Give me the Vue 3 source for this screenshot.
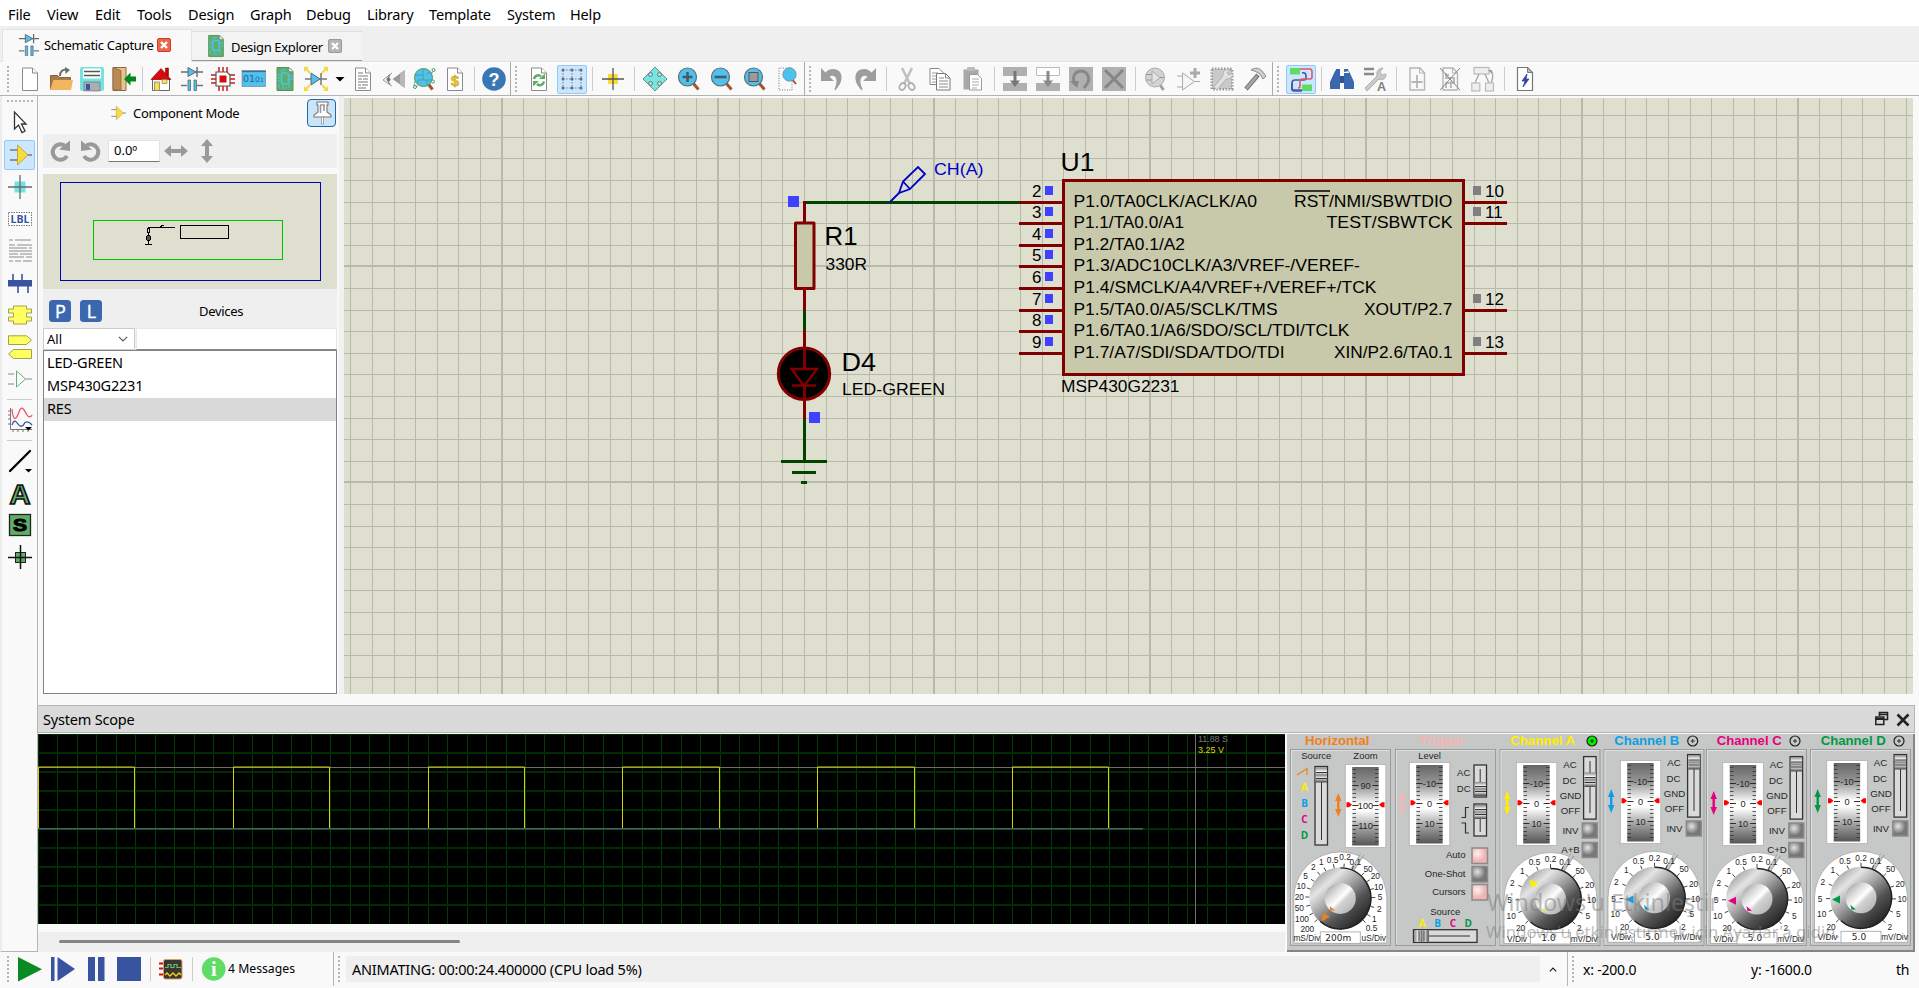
<script setup>
const menus = [
  ['File', 39], ['View', 48], ['Edit', 42], ['Tools', 51], ['Design', 62], ['Graph', 56],
  ['Debug', 61], ['Library', 62], ['Template', 78], ['System', 63], ['Help', 40]
]

const lens = '<path d="M15.5 15.5l6 7" stroke="#a0562f" stroke-width="3"/><circle cx="10.5" cy="10" r="9" fill="#4fc1ec" stroke="#5c6b72" stroke-width="1.2"/>'
const diode = '<path d="M1 5h22M17 0v10" stroke="#6a6a6a" stroke-width="1.4"/><path d="M8 .5l8 4.5-8 4.5z" fill="#4fc1ec" stroke="#5a6a72"/>'
const page = '<path d="M4.5 1h10l5 5v17.500h-15z" fill="#fff" stroke="#8a8a8a"/><path d="M14.500 1v5h5" fill="#fff" stroke="#8a8a8a"/>'
const pageGrey = '<path d="M5 1h10l4.500 5v17h-14.500z" fill="#f8f8f8" stroke="#b5b5b5" stroke-width="1.400"/><path d="M14.500 1v5h5" fill="none" stroke="#b5b5b5"/>'
const pcb = '<path d="M4 .5h12l4 4v19h-16z" fill="#5fae68" stroke="#5b8f60"/><path d="M16 .5v4h4z" fill="#fff" stroke="#8a8a8a" stroke-width=".7"/><rect x="8.500" y="6" width="7" height="11" rx="2" fill="none" stroke="#4fc1ec" stroke-width="1.600"/><path d="M4.500 8h3M4.500 11h3M4.500 14h3M16 9h4M16 12h4M10 17v4h4M9 6v-3h4M16 15v6M6 17v4" stroke="#4fc1ec" fill="none"/>'

const icons = {
  new: page,
  open: '<path d="M1.500 22.500v-14h7l2 2h11v4" fill="#a9794a" stroke="#8d6336"/><path d="M1 23l3.500-10h19.500l-2 10z" fill="#f2b661"/><path d="M11 9c0-5 3-7 7-6.500" fill="none" stroke="#6b6b6b" stroke-width="2"/><path d="M16 0l5 3-4.500 4z" fill="#6b6b6b"/>',
  save: '<path d="M0 2q0-2 2-2h20q2 0 2 2v20q0 2-2 2H2q-2 0-2-2z" fill="#74e2df"/><rect x="3" y="1.500" width="18" height="10" fill="#fff"/><path d="M4 4.500h16M4 8.500h16" stroke="#555" stroke-width="1.300"/><path d="M4 15h16v9H4z" fill="#a9aeb5" stroke="#666" stroke-width=".6"/><rect x="6" y="17" width="4" height="6" fill="#3853a0"/>',
  exit: '<path d="M1 .5h13v23h-13z" fill="#e6c391" stroke="#8e6b3c"/><path d="M1 .5l8 3v20l-8-1z" fill="#b98a58" stroke="#86612f" stroke-width=".7"/><path d="M12 12l6.500-6.500v4H24v5h-5.500v4z" fill="#008a1e"/>',
  home: '<path d="M3.500 12h17v11.500h-17z" fill="#fff" stroke="#666"/><path d="M16.500 1h3v8h-3z" fill="#c00" stroke="#600" stroke-width=".5"/><path d="M12 1.500l10 11H2z" fill="#d80c0c" stroke="#8d0000" stroke-width=".6"/><rect x="5.500" y="15" width="5" height="8.500" fill="#f7de4a" stroke="#777" stroke-width=".7"/><rect x="13" y="12.500" width="5" height="4" fill="#f7de4a" stroke="#777" stroke-width=".6"/>',
  schem: diode + '<path d="M1 18.500h6M17 18.500h6" stroke="#777" stroke-width="1.400"/><path d="M8 13h2.500v10.500H8zM14 13h2.500v10.500H14z" fill="#4fc1ec" stroke="#5a6a72" stroke-width=".8"/>',
  chip: '<path d="M8 0v24M12 0v24M16 0v24M0 8h24M0 12h24M0 16h24" stroke="#d01717" stroke-width="1.500"/><path d="M5 5h11l3 3v11H5z" fill="#fff" stroke="#555" stroke-width="1.200"/><rect x="8.500" y="8.500" width="7" height="7" fill="#d80c0c"/>',
  bits: '<rect x="0" y="3.500" width="23.500" height="16" fill="#4fc1ec" stroke="#6a7a82" stroke-width=".6"/><path d="M0 4.500h24" stroke="#3c6f92" stroke-width="1.200"/><text x="1" y="15" font-size="9.500" font-family="DejaVu Sans" fill="#2c5b9c">01<tspan font-size="7.500">0</tspan><tspan font-size="6">1</tspan></text>',
  pcb,
  diodeY: '<path d="M1 1l5 5M23 1l-5 5M1 23l5-5M23 23l-5-5" stroke="#f5d93a" stroke-width="2"/><path d="M0 0h5L0 5zM24 0v5l-5-5zM0 24v-5l5 5zM24 24h-5l5-5z" fill="#f5d93a"/><path d="M1 12h22M17 6v12" stroke="#777" stroke-width="1.500"/><path d="M7 6l9 6-9 6z" fill="#4fc1ec" stroke="#5a6a72"/>',
  drop: '<path d="M7.500 10h9l-4.500 4.500z" fill="#000"/>',
  doc: page + '<path d="M7 6h5M7 9h10M7 12h4M12 12h5M7 15h10M7 18h3M11 18h6M7 21h8" stroke="#777"/>',
  eye: '<path d="M1 13l9-7M1 13l9 6" stroke="#999" fill="none"/><path d="M8 7.500q-4 5 0 10" fill="none" stroke="#888" stroke-width="1.300"/><circle cx="6.500" cy="12.500" r="2" fill="#777"/><path d="M10.500 12l12.500-9v18z" fill="#9a9a9a"/><path d="M18 6l5-3v18l-5-3z" fill="#b8b8b8"/>',
  globe: '<path d="M15.500 16l5 6.500" stroke="#a0562f" stroke-width="3"/><circle cx="11.500" cy="10.500" r="9" fill="#4fc1ec" stroke="#4b9a62" stroke-width="1"/><path d="M3 8h8v-6M11 8v5h9M15 13v6M6 17v-4h5M15 6h5l2-3M3 14l-1 5h4" fill="none" stroke="#3f9f86" stroke-width=".8"/><circle cx="21.500" cy="3" r="1.500" fill="#fff" stroke="#4b9a62"/><circle cx="3" cy="20" r="1.500" fill="#fff" stroke="#4b9a62"/><circle cx="21" cy="14.500" r="1.500" fill="#fff" stroke="#4b9a62"/>',
  bill: page + '<text x="12" y="19" text-anchor="middle" font-size="15" font-weight="700" font-family="Liberation Sans" fill="#f5c51f" stroke="#a98c20" stroke-width=".4">$</text>',
  help: '<circle cx="12" cy="12" r="11.800" fill="#3b76b4"/><text x="12" y="18.500" text-anchor="middle" font-size="18" font-weight="700" font-family="Liberation Sans" fill="#fff">?</text>',
  refresh: page + '<path d="M7 12c1-4 5-4.500 7-2.500" stroke="#5fae68" stroke-width="2.500" fill="none"/><path d="M12 12h6V6.500z" fill="#5fae68"/><path d="M17 14.500c-1 4-5 4.500-7 2.500" stroke="#5fae68" stroke-width="2.500" fill="none"/><path d="M12 14H6v5.500z" fill="#5fae68"/>',
  grid: '<g stroke="#6f7f8b" stroke-dasharray="1.500 1.500"><path d="M3 3h18M3 12h18M3 21h18M3 3v18M12 3v18M21 3v18"/></g><g fill="#5f6e7a"><circle cx="3" cy="3" r="1.500"/><circle cx="12" cy="3" r="1.500"/><circle cx="21" cy="3" r="1.500"/><circle cx="3" cy="12" r="1.500"/><circle cx="12" cy="12" r="1.500"/><circle cx="21" cy="12" r="1.500"/><circle cx="3" cy="21" r="1.500"/><circle cx="12" cy="21" r="1.500"/><circle cx="21" cy="21" r="1.500"/></g>',
  origin: '<rect x="7" y="7" width="10" height="10" fill="#f7dc3a"/><path d="M1 12h22M12 1v22" stroke="#555" stroke-width="1.300"/>',
  move: '<path d="M12 0l6 6h-3v3h3V6l6 6-6 6v-3h-3v3h3l-6 6-6-6h3v-3H6v3l-6-6 6-6v3h3V6H6z" fill="#74e6e2" stroke="#6b7f80" stroke-width=".9"/><path d="M6 6h3v3H6zM15 6h3v3h-3zM6 15h3v3H6zM15 15h3v3h-3z" fill="#fff" stroke="#6b7f80" stroke-width=".9"/>',
  zin: lens + '<path d="M10.500 5v10M5.500 10h10" stroke="#4a5a62" stroke-width="2.600"/>',
  zout: lens + '<path d="M4.500 10h12" stroke="#4a5a62" stroke-width="2.600"/>',
  zfit: lens + '<rect x="6" y="5.500" width="9" height="9" fill="#9a9a9a" stroke="#555"/>',
  zarea: '<path d="M3 1v22h13V1z" fill="none" stroke="#777" stroke-dasharray="1 1.500"/><path d="M16 12l4 5" stroke="#a0562f" stroke-width="2"/><circle cx="13.500" cy="7.500" r="6.700" fill="#4fc1ec" stroke="#5c8ba0" stroke-width=".7"/>',
  undo: '<path d="M1 1v13h13l-4.500-4.500c5-3 10 2 5 12.500l.5 1.500C25 14 23 2 13 2 9 2 7 4 5.500 5.500z" fill="#9d9d9d"/>',
  redo: '<path d="M23 1v13H10l4.500-4.500c-5-3-10 2-5 12.500l-.5 1.500C-1 14 1 2 11 2c4 0 6 2 7.500 3.500z" fill="#9d9d9d"/>',
  cut: '<path d="M7 1l8 16M17 1L9 17" stroke="#c0c0c0" stroke-width="2.600"/><ellipse cx="7.500" cy="19.500" rx="2.800" ry="3.600" fill="none" stroke="#b0b0b0" stroke-width="1.700" transform="rotate(35 7.500 19.500)"/><ellipse cx="16.500" cy="19.500" rx="2.800" ry="3.600" fill="none" stroke="#b0b0b0" stroke-width="1.700" transform="rotate(-35 16.500 19.500)"/>',
  copy: '<path d="M2 1.500h9l4 4v12H2z" fill="#fff" stroke="#888"/><path d="M4 6h6M4 9h6M4 12h6M4 15h6" stroke="#999"/><path d="M8.500 6.500h9l4.500 4.500v12H8.500z" fill="#fff" stroke="#777"/><path d="M17.500 6.500v4.500H22M11 11h5M11 14h9M11 17h9M11 20h9" fill="none" stroke="#888"/>',
  paste: '<path d="M2.500 2.500h15v20h-15z" fill="#a9a9a9"/><rect x="6" y="0" width="8" height="4" rx="1" fill="#bcbcbc"/><path d="M8.500 7.500h8l4 4v11.500h-12z" fill="#fff" stroke="#999"/><path d="M11 12h7M11 15h7M11 18h7M11 21h5" stroke="#aaa"/>',
  bcopy: '<path d="M0 0h24v9H0zM0 16h24v8H0z" fill="#b0b0b0"/><path d="M10.500 4h3v9.500H17L12 20l-5-6.500h3.500z" fill="#777"/>',
  bmove: '<path d="M.5 .5h23v8H.5z" fill="#fff" stroke="#bbb"/><path d="M0 16h24v8H0z" fill="#b0b0b0"/><path d="M10.500 4h3v9.500H17L12 20l-5-6.500h3.500z" fill="#8a8a8a"/>',
  brot: '<path d="M0 0h24v24H0z" fill="#b0b0b0"/><path d="M6 17c-4-8 1-13 6-13 6 0 10 7 6 13l-3 4" fill="none" stroke="#888" stroke-width="3"/><path d="M1 14h9l-2 7z" fill="#888"/>',
  bdel: '<path d="M0 0h24v24H0z" fill="#b0b0b0"/><path d="M3 3l18 18M21 3L3 21" stroke="#858585" stroke-width="3"/>',
  pick: '<path d="M15.500 17l4 6" stroke="#a0a0a0" stroke-width="3"/><circle cx="11" cy="10.500" r="9.500" fill="#d3d3d3" stroke="#aaa"/><path d="M2 7.500h6M2 13h6M15 10.500h5" stroke="#999"/><path d="M8 4v13l8-6.500z" fill="#e4e4e4" stroke="#aaa"/>',
  make: '<path d="M0 9h5M0 20h5M17 14.500h6" stroke="#aaa"/><path d="M5.500 6v17l12-8.500z" fill="#f6f6f6" stroke="#aaa"/><path d="M18 1v10M13 6h10" stroke="#aaa" stroke-width="3"/>',
  pkg: '<path d="M2 2h20v20H2z" fill="#c9c9c9" stroke="#999" stroke-width="3" stroke-dasharray="1.500 1.500"/><path d="M3 3h18v18H3z" fill="#c9c9c9"/><path d="M4 20L13 9q-1-7 7-7l-3 4 2 2 4-2q0 6-7 6L7 23z" fill="#e2e2e2" stroke="#aaa" stroke-width=".8"/>',
  hammer: '<path d="M15 8L3 22" stroke="#777" stroke-width="4.500"/><path d="M14 9L3.500 21.500" stroke="#a8a8a8" stroke-width="2.600"/><path d="M8 3c5-3 8-2 11 1l4 5-3 3-3-5c-3-2-5-3-9-4z" fill="#d0d0d0" stroke="#8a8a8a"/>',
  wires: '<path d="M13 6q4-1 4 3v2q0 2-2 2H6q-3 0-3 3v5q0 2 2 2h8" fill="none" stroke="#45579d" stroke-width="1.600"/><path d="M11 2h10q2 0 2 3v5q0 2-2 2h-8q-2 0-2 3v4q0 2-2 2" fill="none" stroke="#e35367" stroke-width="1.600"/><path d="M3 16v6q0 2 2 2h8" fill="none" stroke="#45579d" stroke-width="1.600"/><rect x="1" y="1" width="10" height="6.500" fill="#5fdc66"/><rect x="13" y="17.500" width="10" height="6.500" fill="#5fdc66"/>',
  binoc: '<path d="M5 4l5 1v17H0v-7zM19 4l-5 1v17h10v-7zM6 2h4v4H5zM14 2h4l1 4h-5z" fill="#3b67ae"/><path d="M10 9h4v7h-4z" fill="#2d5594"/>',
  wrenchA: '<path d="M1 2h10M1 7h10" stroke="#8a8a8a" stroke-width="2.600"/><path d="M2 21L14 9c-1-5 2-8 6-8l-3 4 2 3 4-1c0 5-4 7-7 5L4 24z" fill="#c9c9c9" stroke="#a5a5a5" stroke-width=".8"/><text x="18.500" y="23.500" text-anchor="middle" font-size="12.500" font-weight="700" font-family="Liberation Sans" fill="#808080">A</text>',
  sheetAdd: pageGrey + '<path d="M12 8v13M6.500 15h11" stroke="#b5b5b5" stroke-width="1.800"/>',
  sheetDel: pageGrey + '<path d="M8 6v5h8v5H8v5M8 8h3M13 14v7" fill="none" stroke="#bbb" stroke-width="2"/><path d="M2 1l20 22M22 1L2 23" stroke="#888"/>',
  hier: '<rect x="3" y=".5" width="15" height="6.500" fill="#eee" stroke="#bbb" stroke-width="1.200"/><path d="M8 7l-4 9M14 7l4 9M20 3c3 5 2 9 0 13" fill="none" stroke="#aaa" stroke-width="1.400"/><rect x=".8" y="16" width="8" height="8" fill="#eee" stroke="#bbb" stroke-width="1.200"/><rect x="14.500" y="16" width="8" height="8" fill="#eee" stroke="#bbb" stroke-width="1.200"/><path d="M17 3h4v4z" fill="#999"/>',
  erc: '<path d="M4.500 .5h10l5 5v18h-15z" fill="#fff" stroke="#777" stroke-width="1.200"/><path d="M14.500 .5v5h5z" fill="#bbb" stroke="#666" stroke-width=".8"/><path d="M14 7l-5 7h3l-2 6 6-8h-3z" fill="#35499f" stroke="#35499f" stroke-width=".8"/>',
  arrow: '<path d="M6.500 1v17l4-4 3.500 7.500 3-1.500-3.500-7H18z" fill="#fff" stroke="#333" stroke-width="1.300"/>',
  comp: '<path d="M2 7h8M2 17h8M17 12h7" stroke="#7a7a7a" stroke-width="1.300"/><path d="M9.500 2v20L20 12z" fill="#f9dc38" stroke="#b59a35" stroke-width=".8"/>',
  junction: '<rect x="6.500" y="6.500" width="11" height="11" fill="#74e2df"/><path d="M0 12h24M12 0v24" stroke="#5f6c6c" stroke-width="1.300"/>',
  lbl: '<rect x=".5" y="5.500" width="23" height="13" fill="#fff" stroke="#777" stroke-dasharray="1.500 1"/><text x="12" y="16" text-anchor="middle" font-size="10.500" textLength="19" font-family="Open Sans" font-weight="700" fill="#3853a0">LBL</text>',
  script: '<path d="M1 1h4M7 1h16M1 6h6M9 6h15M1 9h18M21 9h3M1 12h23M1 15h9M12 15h12M1 18h15M18 18h6M1 22h4M7 22h6M15 22h9" stroke="#8b8b8b" stroke-width="1.200"/>',
  bus: '<path d="M5 3v8M14 3v8M10 13v9M20 13v9" stroke="#3853a0" stroke-width="1.600"/><rect x="0" y="9" width="24" height="6.500" fill="#3853a0"/>',
  sub: '<path d="M.5 6h5V3h13v3h5v4h-5v4h5v4h-5v3h-13v-3h-5v-4h5v-4h-5z" fill="#ffff60" stroke="#a2a24a" stroke-width="1"/>',
  terms: '<path d="M.5 .8h18l5 4.200-5 4.500H.5zM23.500 14.500h-18l-5 4.500 5 4.500h18z" fill="#ffff60" stroke="#a2a24a"/>',
  pin: '<path d="M0 7h6M0 17h6M18 12h6" stroke="#888"/><path d="M8.500 4v16l9-8z" fill="#fff" stroke="#5fae78"/>',
  graph: '<path d="M2.500 0v21.500H24M0 3h2M0 7h2M0 11h2M0 16h2M5 22v2M10 22v2M15 22v2M20 22v2" fill="none" stroke="#777"/><path d="M4 1c1 12 4 12 7 3s6 0 8 3 4 2 5 0" fill="none" stroke="#ec5460" stroke-width="1.300"/><path d="M4 17c2-6 4-4 6-1s5 3 6 0 5-3 8 1" fill="none" stroke="#3853a0" stroke-width="1.300"/><path d="M17 19h7l-3.500 3.500z"/>',
  line: '<path d="M2 22L22 2" stroke="#000" stroke-width="2.300" stroke-linecap="round"/><path d="M17 20h7l-3.500 3.500z"/>',
  textA: '<text x="12" y="22.500" text-anchor="middle" font-size="28" textLength="21" lengthAdjust="spacingAndGlyphs" font-family="Liberation Sans" font-weight="700" fill="#5fae68" stroke="#111" stroke-width="1.600">A</text>',
  symS: '<rect x="1.500" y="1.500" width="21" height="21" fill="#5fae68" stroke="#222" stroke-width="1.300"/><text x="12" y="17.800" text-anchor="middle" font-size="16" textLength="14" lengthAdjust="spacingAndGlyphs" font-family="Liberation Sans" font-weight="700" fill="#000" stroke="#000">S</text>',
  marker: '<rect x="7.500" y="7.500" width="10" height="10" fill="#5fae68" stroke="#222"/><path d="M0 12.500h24M12.500 0v24" stroke="#111" stroke-width="1.500"/>'
}

// [kind, centre] along the bar's main axis; spacing is derived from neighbouring centres
const widths = { grip: 4, sep: 1, tall: 1 }
function layout(list, start, boxed) {
  let edge = start
  return list.map(([name, c]) => {
    const w = boxed.includes(name) ? 30 : (widths[name] || 24)
    const gap = c - w / 2 - edge
    edge = c + w / 2
    return { name, gap: gap + 'px', on: boxed.includes(name) }
  })
}
const toolbar = layout([
  ['grip', 8], ['new', 30], ['open', 61], ['save', 92], ['exit', 123.5], ['sep', 142.5], ['home', 161], ['schem', 192],
  ['chip', 223], ['bits', 254], ['pcb', 285], ['diodeY', 316], ['drop', 339.5], ['doc', 363], ['eye', 393.5], ['globe', 424],
  ['bill', 455], ['sep', 474.5], ['help', 493.5], ['tall', 510.5], ['grip', 516], ['refresh', 539], ['grid', 571.5],
  ['sep', 592.5], ['origin', 613], ['sep', 634.5], ['move', 655], ['zin', 689], ['zout', 722], ['zfit', 755], ['zarea', 788],
  ['tall', 804.5], ['grip', 810], ['undo', 832], ['redo', 865], ['sep', 886.5], ['cut', 907], ['copy', 940], ['paste', 973],
  ['sep', 994.5], ['bcopy', 1015], ['bmove', 1048], ['brot', 1081], ['bdel', 1114], ['sep', 1135.5], ['pick', 1156], ['make', 1189],
  ['pkg', 1222], ['hammer', 1255], ['tall', 1272.5], ['grip', 1278], ['wires', 1300.5], ['sep', 1321.5], ['binoc', 1342],
  ['wrenchA', 1375], ['sep', 1396.5], ['sheetAdd', 1417], ['sheetDel', 1450], ['hier', 1483], ['sep', 1504.5], ['erc', 1525]
], 2, ['grid', 'wires'])
const modes = layout([
  ['grip', 101], ['arrow', 123], ['comp', 155], ['junction', 187], ['lbl', 219], ['script', 251], ['bus', 282.5],
  ['sub', 315], ['terms', 347], ['pin', 379], ['sep', 399.5], ['graph', 420], ['sep', 440.5], ['line', 461],
  ['textA', 493], ['symS', 525], ['marker', 557]
], 96, ['comp'])

const devices = ['LED-GREEN', 'MSP430G2231', 'RES']

const vLines = Array.from({ length: 73 }, (_, i) => i - 7).map(k => ({ p: Math.floor(502 + 21.6 * k), major: k % 10 === 0 }))
const hLines = Array.from({ length: 28 }, (_, i) => i - 7).map(k => ({ p: Math.floor(266.9 + 21.6 * k), major: k % 10 === 0 }))

const leftPins = [
  [2, 202, 'P1.0/TA0CLK/ACLK/A0', 183.5], [3, 223, 'P1.1/TA0.0/A1', 110.5], [4, 245, 'P1.2/TA0.1/A2', 111.5],
  [5, 266, 'P1.3/ADC10CLK/A3/VREF-/VEREF-', 286.5], [6, 288, 'P1.4/SMCLK/A4/VREF+/VEREF+/TCK', 303],
  [7, 310, 'P1.5/TA0.0/A5/SCLK/TMS', 204], [8, 331, 'P1.6/TA0.1/A6/SDO/SCL/TDI/TCLK', 276],
  [9, 353, 'P1.7/A7/SDI/SDA/TDO/TDI', 211]
]
const rightPins = [
  [10, 202, 'RST/NMI/SBWTDIO', 158.5], [11, 223, 'TEST/SBWTCK', 126], [12, 310, 'XOUT/P2.7', 88.5], [13, 353, 'XIN/P2.6/TA0.1', 118.5]
]

const scopeV = Array.from({ length: 64 }, (_, i) => Math.round(38 + 19.48 * i) + 0.5)
const scopeH = Array.from({ length: 11 }, (_, i) => Math.round(734 + 19.05 * i))
const step = 97.4
const highs = Array.from({ length: 6 }, (_, i) => [Math.round(38 + step * 2 * i) + 0.5, Math.round(38 + step * (2 * i + 1)) - 0.5])

const ticks = Array.from({ length: 19 }, (_, i) => -36 + i * 4)
const chanDial = [
  [-30, 29.3, '20'], [-39.3, 16.7, '10'], [-41, 1, '5'], [-38.3, -16.3, '2'], [-28.3, -28.3, '1'], [-16, -37, '0.5'],
  [0, -40, '0.2'], [14.5, -37, '0.1'], [29.5, -28.5, '50'], [39, -14, '20'], [41, 1.3, '10'], [37.3, 16.7, '5'], [28.7, 29.3, '2']
]
const timeDial = [
  [-33, 30.3, '200'], [-38.3, 20.7, '100'], [-41, 9.3, '50'], [-41, -1.7, '20'], [-39.3, -12.3, '10'], [-34.7, -22.7, '5'],
  [-27, -31.3, '2'], [-19, -36, '1'], [-7.7, -38.3, '0.5'], [4.7, -41, '0.2'], [15, -36.7, '0.1'], [27.7, -29.7, '50'],
  [35, -22, '20'], [38.3, -11.3, '10'], [39.7, -1, '5'], [39, 10.3, '2'], [34, 20.3, '1'], [31.3, 30, '0.5']
]
const tick = ([x, y]) => {
  const r = Math.hypot(x, y)
  return `M${x / r * 31} ${y / r * 31}L${x / r * 35} ${y / r * 35}`
}
const edgePointer = 'M-29 1.700L-21-2.300V5.700z'
const innerPointer = 'M-10.700 7L-5 11.700L-9.500 12z'
const channels = [
  { n: 'A', x: 1500, dy: 0, color: '#ffee00', lamp: 92, on: true, value: '1.0', thumb: 16.5, extra: 'A+B', outer: 'M-21.300-19.300L-12-16.300L-18-11z', inner: 'M-9.700 9.300L-4 11.700H-8z' },
  { n: 'B', x: 1604, dy: -2, color: '#0c9fe4', lamp: 88.7, value: '5.0', thumb: 1, outer: edgePointer, inner: innerPointer },
  { n: 'C', x: 1706.5, dy: 0, color: '#e5007d', lamp: 88.5, value: '5.0', thumb: 1, extra: 'C+D', outer: edgePointer, inner: innerPointer },
  { n: 'D', x: 1810.5, dy: -2, color: '#009846', lamp: 88.5, value: '5.0', thumb: 1, outer: edgePointer, inner: innerPointer }
]
const dials = [
  { x: 1340.3, y: 898.4, labels: timeDial, color: '#f08019', outer: 'M-19 23L-17 14.700L-10.300 18.300z', inner: 'M-10.700 7.700L-5 12H-10z', value: '200m', left: 'mS/Div', right: 'uS/Div' },
  ...channels.map(c => ({ x: c.x + 50.5, y: 899 + c.dy * 0.6, labels: chanDial, color: c.color, outer: c.outer, inner: c.inner, value: c.value, left: 'V/Div', right: 'mV/Div' }))
]
const wheels = [
  { x: 1365.5, y: 805.5, labels: ['90', '100', '110'], ax: 1338.3, color: '#f08019' },
  { x: 1429.5, y: 803.5, labels: ['-10', '0', '10'], ax: 1402.3, color: '#f7b5b5' },
  ...channels.map(c => ({ x: c.x + 36.5, y: 803.5 + c.dy, labels: ['-10', '0', '10'], ax: c.x + 7.2, color: c.color }))
]
const sections = [1290.5, 1395.5, 1500, 1604, 1706.5, 1810.5]
const sources = [['A', '#ffee00'], ['B', '#0c9fe4'], ['C', '#e5007d'], ['D', '#009846']]
</script>

<template>
  <div class="app">
    <nav class="menubar">
      <span v-for="m in menus" :key="m[0]" :style="{ width: m[1] + 'px' }">{{ m[0] }}</span>
    </nav>

    <div class="tabs">
      <div class="tab active">
        <svg class="ic" viewBox="0 0 24 24" v-html="icons.schem" />
        <span class="t1">Schematic Capture</span>
        <svg class="x" viewBox="0 0 14 14"><rect x=".5" y=".5" width="13" height="13" rx="1.500" fill="#e8694a" stroke="#cf3b23" /><path d="M4 4l6 6M10 4l-6 6" stroke="#fff" stroke-width="2.400" /></svg>
      </div>
      <div class="tab idle">
        <svg class="ic" viewBox="0 0 24 24" v-html="icons.pcb" />
        <span class="t2">Design Explorer</span>
        <svg class="x" viewBox="0 0 14 14"><rect x=".5" y=".5" width="13" height="13" rx="1.500" fill="#b5b5b5" stroke="#9a9a9a" /><path d="M4 4l6 6M10 4l-6 6" stroke="#fff" stroke-width="2.400" /></svg>
      </div>
    </div>

    <div class="toolbar">
      <div v-for="(t, i) in toolbar" :key="i" :class="['slot', t.name, { on: t.on }]" :style="{ marginLeft: t.gap }">
        <svg v-if="icons[t.name]" viewBox="0 0 24 24" v-html="icons[t.name]" />
      </div>
    </div>

    <div class="body">
      <aside class="modes">
        <div v-for="(t, i) in modes" :key="i" :class="['slot', t.name, { on: t.on }]" :style="{ marginTop: t.gap }">
          <svg v-if="icons[t.name]" viewBox="0 0 24 24" v-html="icons[t.name]" />
        </div>
      </aside>

      <div class="work">
        <div class="upper">
          <section class="panel">
            <header class="phead">
              <svg class="pic" viewBox="0 0 24 24" v-html="icons.comp" />
              <span>Component Mode</span>
              <div class="pinbtn">
                <svg viewBox="0 0 24 24"><path d="M7 1h11v3h-1v7l4 3v2H4v-2l4-3V4H7z" fill="#fff" stroke="#777" stroke-width="1.100" /><path d="M10 4h5M10.500 4v8M14 4v6" stroke="#999" stroke-width="1.600" /><path d="M11.500 16h2v7h-2z" fill="#fff" stroke="#888" stroke-width=".7" /></svg>
              </div>
            </header>
            <div class="rot">
              <svg class="r1" viewBox="0 0 20 20"><path d="M14.500 4.500A7.700 7.700 0 1 0 17 15" fill="none" stroke="#999" stroke-width="4" /><path d="M9 8.500L20 10V-.5z" fill="#999" /></svg>
              <svg class="r2" viewBox="0 0 20 20"><path d="M5.500 4.500A7.700 7.700 0 1 1 3 15" fill="none" stroke="#999" stroke-width="4" /><path d="M11 8.500L0 10V-.5z" fill="#999" /></svg>
              <div class="angle">0.0º</div>
              <svg class="r3" viewBox="0 0 24 24"><path d="M0 12l7-6v4h10V6l7 6-7 6v-4H7v4z" fill="#999" /></svg>
              <svg class="r4" viewBox="0 0 24 24"><path d="M12 0l6 7h-4v10h4l-6 7-6-7h4V7H6z" fill="#999" /></svg>
            </div>
            <svg class="preview" viewBox="43 174 294 115">
              <rect x="60.500" y="182.500" width="260" height="98" fill="none" stroke="#0000c0" />
              <rect x="93.500" y="220.500" width="189" height="39" fill="none" stroke="#00c000" />
              <rect x="180.500" y="225.500" width="48" height="13" fill="none" stroke="#000" />
              <path d="M175 227.500H148.500V245M160 227.500l2-2h2M145 244.500h7" fill="none" stroke="#000" />
              <circle cx="148.500" cy="238" r="2.500" fill="#555" stroke="#000" />
              <rect x="147.500" y="228.500" width="2" height="4" fill="#dfdfd0" stroke="#000" />
            </svg>
            <div class="dev">
              <svg viewBox="0 0 22 22"><rect width="22" height="22" rx="3.500" fill="#3b67ae" /><text x="11.500" y="17.500" text-anchor="middle">P</text></svg>
              <svg viewBox="0 0 22 22"><rect width="22" height="22" rx="3.500" fill="#3b67ae" /><text x="11.500" y="17.500" text-anchor="middle">L</text></svg>
              <span>Devices</span>
            </div>
            <div class="filter">
              <div class="combo">All<svg viewBox="0 0 10 6"><path d="M.8 .8L5 5L9.200 .8" fill="none" stroke="#555" stroke-width="1.100" /></svg></div>
              <div class="field" />
            </div>
            <ul class="list">
              <li v-for="d in devices" :key="d" :class="{ sel: d === 'RES' }"><span>{{ d }}</span></li>
            </ul>
          </section>

          <svg class="canvas" viewBox="344 98 1569 596">
            <g fill="#b9b9ab" shape-rendering="crispEdges">
              <rect v-for="l in vLines" :key="'v' + l.p" :x="l.major ? l.p - 1 : l.p" y="98" :width="l.major ? 2 : 1" height="596" />
              <rect v-for="l in hLines" :key="'h' + l.p" x="344" :y="l.major ? l.p - 1 : l.p" width="1569" :height="l.major ? 2 : 1" />
            </g>
            <g fill="none" stroke="#004400" stroke-width="3">
              <path d="M804 202.500H1020M804.500 311V331M804.500 418V461" />
              <path d="M781 461.500H827M792 472.500H816M801 482.500H807" />
            </g>
            <g stroke="#800000" stroke-width="3" fill="none">
              <path d="M804.500 201V223M804.500 289V311M804.500 330V348" />
              <rect x="795.500" y="223" width="18.500" height="65.500" fill="#c8c8aa" stroke-linejoin="round" />
              <circle cx="804" cy="373.700" r="25.700" fill="#000" />
              <path d="M804.500 347V369M804.500 386V419" />
              <path d="M791.500 369H817L804 386zM792 385.500H816" stroke-width="2.400" />
              <rect x="1063.500" y="180.500" width="400" height="194" fill="#c8c8aa" />
              <path v-for="p in leftPins" :key="p[0]" :d="`M1019 ${p[1] + 0.5}H1062`" />
              <path v-for="p in rightPins" :key="p[0]" :d="`M1465 ${p[1] + 0.5}H1507`" />
            </g>
            <g fill="#4040ff">
              <rect x="788" y="196" width="11" height="11" /><rect x="809" y="412" width="11" height="11" />
              <rect v-for="p in leftPins" :key="p[0]" x="1045" :y="p[1] - 16" width="8" height="9" />
            </g>
            <rect v-for="p in rightPins" :key="p[0]" x="1473" :y="p[1] - 16" width="8" height="9" fill="#808080" />
            <path d="M890 202L899 193M899 193L903 181.500L918 167L925 174L910 189zM903 181.500L910 189" fill="none" stroke="#0000c8" stroke-width="1.800" />
            <g class="sch" font-size="17">
              <text x="934" y="174.700" textLength="49.500" lengthAdjust="spacingAndGlyphs" class="blue">CH(A)</text>
              <g v-for="p in leftPins" :key="p[0]">
                <text x="1041.500" :y="p[1] - 5" text-anchor="end">{{ p[0] }}</text>
                <text x="1073.500" :y="p[1] + 5.4" :textLength="p[3]" lengthAdjust="spacingAndGlyphs">{{ p[2] }}</text>
              </g>
              <g v-for="p in rightPins" :key="p[0]">
                <text x="1485" :y="p[1] - 5">{{ p[0] }}</text>
                <text :x="1452.5 - p[3]" :y="p[1] + 5.4" :textLength="p[3]" lengthAdjust="spacingAndGlyphs">{{ p[2] }}</text>
              </g>
              <path d="M1294.500 191H1330" stroke="#000" stroke-width="1.500" />
              <text x="1061" y="392" textLength="118.500" lengthAdjust="spacingAndGlyphs">MSP430G2231</text>
              <text x="825.500" y="269.700" textLength="41.500" lengthAdjust="spacingAndGlyphs">330R</text>
              <text x="842" y="395" textLength="103" lengthAdjust="spacingAndGlyphs">LED-GREEN</text>
              <g font-size="26.500">
                <text x="1060.500" y="171" textLength="34" lengthAdjust="spacingAndGlyphs">U1</text>
                <text x="824.500" y="245.300" textLength="33" lengthAdjust="spacingAndGlyphs">R1</text>
                <text x="841.500" y="371.300" textLength="34.500" lengthAdjust="spacingAndGlyphs">D4</text>
              </g>
            </g>
          </svg>
        </div>

        <div class="stitle">
          <span>System Scope</span>
          <svg viewBox="1874 710 36 16" width="36" height="16"><path d="M1879.500 715v-3.500h8v7h-3.500M1879 713.500h9" fill="none" stroke="#222" stroke-width="1.600" /><rect x="1875.800" y="716" width="8" height="7.500" fill="none" stroke="#222" stroke-width="1.500" /><path d="M1876 718h8" stroke="#222" stroke-width="2" /><path d="M1897.500 713.500l11 11M1908.500 713.500l-11 11" stroke="#222" stroke-width="2.600" /></svg>
        </div>

        <div class="scope">
          <div class="sleft">
            <svg class="screen" viewBox="38 734 1247 190">
              <rect x="38" y="734" width="1247" height="190" fill="#000" />
              <path v-for="x in scopeV" :key="x" :d="`M${x} 734V924`" stroke="#003c06" />
              <path v-for="y in scopeH" :key="y" :d="`M38 ${y}H1285`" stroke="#002c04" stroke-width="2" />
              <path d="M38 767.500H1285M1195.500 734V924" stroke="#6e6e6e" />
              <g fill="none" stroke="#d8d000">
                <path v-for="h in highs" :key="h[0]" :d="`M${h[0]} 829V767H${h[1]}V829`" />
              </g>
              <path d="M38 828.700H1143" stroke="#41685f" stroke-width="1.600" />
              <text x="1198" y="742" font-size="9" textLength="30" class="rd" fill="#777">11.88 S</text>
              <text x="1198" y="753" font-size="9" textLength="26" class="rd" fill="#d8d800">3.25 V</text>
            </svg>
            <div class="hscroll"><div class="thumb" /></div>
          </div>

          <svg class="instr" viewBox="1287 734 628 218">
            <defs>
              <linearGradient id="wheel" x1="0" y1="0" x2="0" y2="1"><stop offset="0" stop-color="#666" /><stop offset=".25" stop-color="#999" /><stop offset=".48" stop-color="#fff" /><stop offset=".55" stop-color="#fff" /><stop offset=".8" stop-color="#999" /><stop offset="1" stop-color="#555" /></linearGradient>
              <linearGradient id="knob" x1=".1" y1=".05" x2=".85" y2=".9"><stop offset="0" stop-color="#909090" /><stop offset=".25" stop-color="#e4e4e4" /><stop offset=".45" stop-color="#a8a8a8" /><stop offset=".7" stop-color="#555" /><stop offset="1" stop-color="#222" /></linearGradient>
              <linearGradient id="cap" x1=".1" y1=".1" x2=".9" y2=".9"><stop offset="0" stop-color="#a8a8a8" /><stop offset=".3" stop-color="#e0e0e0" /><stop offset=".5" stop-color="#fff" /><stop offset=".62" stop-color="#d2d2d2" /><stop offset="1" stop-color="#b4b4b4" /></linearGradient>
              <linearGradient id="slide" x1="0" y1="0" x2="0" y2="1"><stop offset="0" stop-color="#888" /><stop offset=".3" stop-color="#fff" /><stop offset=".5" stop-color="#888" /><stop offset=".7" stop-color="#eee" /><stop offset="1" stop-color="#444" /></linearGradient>
              <linearGradient id="slideH"><stop offset="0" stop-color="#888" /><stop offset=".3" stop-color="#fff" /><stop offset=".5" stop-color="#777" /><stop offset=".7" stop-color="#eee" /><stop offset="1" stop-color="#444" /></linearGradient>
              <radialGradient id="btn" cx=".35" cy=".35"><stop offset="0" stop-color="#e4e4e4" /><stop offset="1" stop-color="#777" /></radialGradient>
              <radialGradient id="btnP" cx=".35" cy=".35"><stop offset="0" stop-color="#fff2f2" /><stop offset="1" stop-color="#efb4b4" /></radialGradient>
            </defs>
            <rect x="1287" y="734" width="628" height="218" fill="#c5c8c6" />
            <path d="M1287 951H1914V734" fill="none" stroke="#858585" stroke-width="2" />
            <g fill="none"><rect v-for="s in sections" :key="s" :x="s" y="749.500" width="100" height="196" stroke="#999c9a" /><path v-for="s in sections" :key="'b' + s" :d="`M${s + 1} 944.500V750.500H${s + 99}`" stroke="#dfe1e0" /></g>

            <g class="ttl" font-size="13" font-weight="700">
              <text x="1305" y="745.300" textLength="64.500" lengthAdjust="spacingAndGlyphs" fill="#f08019">Horizontal</text>
              <text x="1419.300" y="745.300" textLength="45" lengthAdjust="spacingAndGlyphs" fill="#f7b5b5">Trigger</text>
              <text v-for="c in channels" :key="c.n" :x="c.x + 10.2" y="745.300" textLength="65" lengthAdjust="spacingAndGlyphs" :fill="c.color">Channel {{ c.n }}</text>
            </g>
            <g v-for="c in channels" :key="'l' + c.n">
              <circle :cx="c.x + c.lamp" cy="741" r="5" :fill="c.on ? '#00f000' : '#c5c8c6'" stroke="#222" stroke-width="1.200" />
              <path :d="`M${c.x + c.lamp - 2} 741h4M${c.x + c.lamp} 739v4`" stroke="#222" stroke-width=".9" />
            </g>

            <g v-for="w in wheels" :key="w.x" :transform="`translate(${w.x} ${w.y})`">
              <rect x="-20.200" y="-41" width="40.500" height="83" fill="#fff" stroke="#aaa" stroke-width=".7" />
              <rect x="-13.300" y="-38.500" width="26.500" height="78.500" fill="url(#wheel)" />
              <path v-for="t in ticks" :key="t" :d="`M-13 ${t}h3.500M13 ${t}h-3.500`" stroke="#333" stroke-width=".8" />
              <path d="M-13-20h6M13-20h-6M-13 0h6M13 0h-6M-13 20h6M13 20h-6" stroke="#222" stroke-width=".9" />
              <text v-for="(l, i) in w.labels" :key="l" x="0" :y="i * 20 - 16.7" text-anchor="middle" font-size="9.200">{{ l }}</text>
              <path d="M-19-3.300h2.500l3 2.500-3 2.500H-19zM19-3.300h-2.500l-3 2.500 3 2.500H19z" fill="#f00" />
              <path :transform="`translate(${w.ax - w.x} -.6)`" d="M0-12l3.200 8h-2v8h2L0 12l-3.200-8h2v-8h-2z" :fill="w.color" />
            </g>

            <g v-for="d in dials" :key="d.x" :transform="`translate(${d.x} ${d.y})`">
              <path d="M-46.500 44.500V0A46.500 46.500 0 0 1 46.500 0V44.500z" fill="#fff" stroke="#9c9c9c" stroke-width=".7" />
              <path d="M12-28.500L22-44" stroke="#999" stroke-width="4.200" /><path d="M12-28.500L23-46" stroke="#c5c8c6" stroke-width="2.800" />
              <path v-for="(l, i) in d.labels" :key="i" :d="tick(l)" stroke="#333" stroke-width=".9" />
              <text v-for="(l, i) in d.labels" :key="'t' + i" :x="l[0]" :y="l[1] + 3" text-anchor="middle" font-size="8.300">{{ l[2] }}</text>
              <circle r="31" fill="url(#knob)" /><path d="M0-30.500A30.500 30.500 0 1 1-20 23" fill="none" stroke="#222" stroke-width="1.400" />
              <circle r="15.500" fill="url(#cap)" />
              <path :d="d.outer" :fill="d.color" /><path :d="d.inner" :fill="d.color" />
              <rect x="-20" y="33.500" width="40" height="11.500" fill="#fff" stroke="#aaa" stroke-width=".9" />
              <text class="val" x="-2" y="42.300" text-anchor="middle" font-size="9">{{ d.value }}</text>
              <text x="-33.500" y="42.700" text-anchor="middle" font-size="8.300">{{ d.left }}</text>
              <text x="33.500" y="42.700" text-anchor="middle" font-size="8.300">{{ d.right }}</text>
            </g>

            <g font-size="9.500">
              <text x="1316.300" y="759.300" text-anchor="middle">Source</text><text x="1365.500" y="759.300" text-anchor="middle">Zoom</text>
              <text x="1429.500" y="759.300" text-anchor="middle">Level</text>
              <text x="1463.700" y="776" text-anchor="middle">AC</text><text x="1463.700" y="792" text-anchor="middle">DC</text>
              <text x="1465.500" y="858" text-anchor="end">Auto</text><text x="1465.500" y="876.500" text-anchor="end">One-Shot</text><text x="1465.500" y="895" text-anchor="end">Cursors</text>
              <text x="1445.300" y="915" text-anchor="middle">Source</text>
            </g>
            <path d="M1297 775l10-6.500v6.500" fill="none" stroke="#f08019" stroke-width="1.200" />
            <g font-size="10" font-weight="700">
              <text v-for="(s, i) in sources" :key="s[0]" class="src" x="1304.500" :y="791.3 + i * 15.8" text-anchor="middle" :fill="s[1]">{{ s[0] }}</text>
              <text v-for="(s, i) in sources" :key="'h' + s[0]" class="src" :x="1422.3 + i * 15.3" y="926.500" text-anchor="middle" :fill="s[1]">{{ s[0] }}</text>
            </g>
            <g fill="#d9dad9" stroke="#333" stroke-width="1.300">
              <rect x="1315" y="766.500" width="12.500" height="78.500" /><rect x="1474" y="765" width="12.500" height="32" /><rect x="1474" y="804" width="12.500" height="32" /><rect x="1413.500" y="929.700" width="63.500" height="12.700" />
              <path d="M1321.500 782v58M1480.200 769v14M1480.200 819v13M1429 936h41" stroke-width="1" />
            </g>
            <rect x="1315.700" y="767.500" width="11.300" height="15" fill="url(#slide)" /><path d="M1316 772.500h11M1316 778.500h11" stroke="#333" />
            <rect x="1474.700" y="782" width="11.300" height="14" fill="url(#slide)" /><path d="M1475 786.500h11M1475 791.500h11" stroke="#333" />
            <rect x="1474.700" y="805" width="11.300" height="14" fill="url(#slide)" /><path d="M1475 809.500h11M1475 814.500h11" stroke="#333" />
            <rect x="1414.300" y="930.300" width="14.500" height="11.500" fill="url(#slideH)" /><path d="M1419 930.500v11M1424 930.500v11" stroke="#333" />
            <path d="M1461.500 817.500h4v-10h3.500M1461.500 823h4v10h3.500" fill="none" stroke="#333" stroke-width="1.200" />
            <g stroke="#8b8b8b" stroke-width="1.500"><rect x="1472" y="848" width="15.500" height="15.500" fill="url(#btnP)" /><rect x="1472" y="866.500" width="15.500" height="15.500" fill="url(#btn)" /><rect x="1472" y="884.500" width="15.500" height="15.500" fill="url(#btnP)" /></g>

            <g v-for="c in channels" :key="'s' + c.n" :transform="`translate(${c.x} ${756 + c.dy})`" font-size="9.700">
              <text x="70" y="12.300" text-anchor="middle">AC</text><text x="69.500" y="28" text-anchor="middle">DC</text>
              <text x="70.500" y="42.500" text-anchor="middle">GND</text><text x="70.500" y="57.500" text-anchor="middle">OFF</text>
              <text x="70.500" y="77.700" text-anchor="middle">INV</text>
              <text v-if="c.extra" x="70.500" y="96.700" text-anchor="middle">{{ c.extra }}</text>
              <rect x="83.600" y=".6" width="12.500" height="62.500" fill="#d9dad9" stroke="#333" stroke-width="1.300" />
              <path d="M90 5V57" stroke="#333" /><rect x="84.300" :y="c.thumb" width="11.300" height="14.500" fill="url(#slide)" />
              <path :d="`M84.500 ${c.thumb + 5}h11M84.500 ${c.thumb + 10}h11`" stroke="#333" />
              <g fill="url(#btn)" stroke="#8b8b8b" stroke-width="1.500"><rect x="82.300" y="67" width="15" height="15" /><rect v-if="c.extra" x="82.300" y="86.500" width="15" height="15" /></g>
            </g>
            <g class="wm">
              <text x="1487" y="910.500" font-size="23.500" textLength="232" lengthAdjust="spacingAndGlyphs">Windows'u Etkinleştir</text>
              <text x="1486" y="938" font-size="16" textLength="354" lengthAdjust="spacingAndGlyphs">Windows'u etkinleştirmek için Ayarlar'a gidin.</text>
            </g>
          </svg>
        </div>
      </div>
    </div>

    <footer class="status">
      <div class="slot grip" />
      <svg class="play" viewBox="16 956 318 26" width="318" height="26">
        <path d="M18 957v24.500l24-12.200z" fill="#0a8a22" />
        <path d="M51 957h3.500v24H51zM57.500 957v24l17.500-12zM88 957h7v24h-7zM98 957h6.500v24H98zM117 957h24v24h-24z" fill="#3853a0" />
        <path d="M150.500 957v24M192.500 957v24" stroke="#ccc" />
        <path d="M159 963.500h5M159 968.500h5M159 974.500h5" stroke="#d01010" stroke-width="2" />
        <rect x="163.500" y="959.500" width="18.500" height="19.500" rx="2" fill="#3d3530" stroke="#d7a065" />
        <path d="M165 967.500h3v-3h3v3h3v-3h3v3h4" fill="none" stroke="#5fc070" stroke-width="1.200" /><path d="M165 975l2-2 3 3 3-3 3 3 3-3 2 2" fill="none" stroke="#f0d020" stroke-width="1.400" />
        <circle cx="213.700" cy="969" r="11.800" fill="#5fdc66" /><text class="info" x="213.700" y="976" text-anchor="middle">i</text>
        <text class="msg" x="228" y="973" textLength="67" lengthAdjust="spacingAndGlyphs">4 Messages</text>
      </svg>
      <div class="vs" /><div class="slot grip g2" />
      <div class="anim"><span>ANIMATING: 00:00:24.400000 (CPU load 5%)</span></div>
      <div class="caret"><svg viewBox="0 0 8 5" width="8" height="5"><path d="M.8 4.300L4 1l3.200 3.300" fill="none" stroke="#222" stroke-width="1.200" /></svg></div>
      <div class="vs" /><div class="slot grip g2" />
      <span class="cx">x: -200.0</span><span class="cy">y: -1600.0</span><span class="th">th</span>
    </footer>
  </div>
</template>

<style>
body { background: #f9f9f9; overflow: hidden; }
</style>

<style scoped>
.app { width: 1919px; height: 988px; display: flex; flex-direction: column; background: #f9f9f9; color: #000; font-family: "Noto Sans", "Open Sans", sans-serif; font-size: 13px; overflow: hidden; }
.app * { box-sizing: border-box; }
svg { display: block; flex: none; overflow: visible; }
.menubar { flex: none; height: 26px; background: #fff; display: flex; padding-left: 8px; line-height: 28px; font-size: 14.500px; letter-spacing: -.15px; }
.menubar span { white-space: nowrap; flex: none; }
.tabs { flex: none; height: 36px; background: #efefef; display: flex; align-items: flex-end; padding-left: 2px; border-bottom: 1px solid #e2e2e2; }
.tab { display: flex; align-items: center; white-space: nowrap; }
.tab.active { width: 190px; height: 33px; margin-bottom: -1px; background: #f9f9f9; border: 1px solid #e2e2e2; border-bottom: 0; padding: 0 0 2px 15px; }
.tab.idle { width: 170px; height: 30px; background: #f3f3f3; border-top: 1px solid #dedede; border-bottom: 1px solid #999; padding: 0 0 1px 13px; }
.tab .ic { width: 22px; height: 24px; }
.tab .x { width: 14px; height: 14px; }
.t1 { width: 107px; margin: 0 6px 0 4px; letter-spacing: -.3px; }
.t2 { width: 90px; margin: 2px 7px 0 4px; letter-spacing: -.35px; }
.tab.idle .x { margin-top: 1px; }
.toolbar { flex: none; height: 34px; display: flex; align-items: center; padding-left: 2px; border-bottom: 1px solid #b3b3b3; border-top: 1px solid #fdfdfd; background: #f9f9f9; }
.slot { flex: none; width: 24px; height: 24px; display: flex; align-items: center; justify-content: center; }
.slot svg { width: 24px; height: 24px; }
.slot.on { width: 30px; height: 29px; background: #cce6fd; border: 1px solid #8fcaf8; border-radius: 2px; }
.slot.sep { width: 1px; height: 24px; background: #ccc; }
.slot.tall { width: 1px; height: 34px; background: #aaa; }
.slot.grip { width: 4px; height: 26px; background: linear-gradient(#b5b5b5 2px, transparent 2px) 1px 0 / 2px 4px repeat-y; }
.body { flex: none; height: 856px; display: flex; }
.modes { width: 38px; border-left: 2px solid #ececec; border-right: 1px solid #b5b5b5; border-bottom: 1px solid #b5b5b5; display: flex; flex-direction: column; align-items: center; }
.modes .slot.grip { width: 26px; height: 4px; background: linear-gradient(90deg, #b5b5b5 2px, transparent 2px) 0 1px / 4px 2px repeat-x; }
.modes .slot.sep { width: 25px; height: 1px; }
.modes .slot.on { width: 31px; height: 30px; }
.work { flex: 1; display: flex; flex-direction: column; }
.upper { height: 598px; display: flex; padding-right: 6px; }
.panel { width: 306px; padding: 0 2px 0 5px; border-right: 5px solid #f1f1f1; }
.panel > * { width: 294px; }
.phead { height: 38px; display: flex; align-items: center; padding: 0 0 4px 67px; letter-spacing: -.3px; }
.pic { width: 16px; height: 16px; margin-right: 7px; }
.phead span { width: 101px; white-space: nowrap; margin-top: -1px; }
.pinbtn { width: 29px; height: 28px; margin-left: 73px; border: 1.500px solid #1c68a8; border-radius: 4px; background: #cce4f7; display: flex; align-items: center; justify-content: center; }
.pinbtn svg { width: 24px; height: 24px; }
.rot { height: 34px; background: #efefef; display: flex; align-items: center; padding-left: 7px; }
.rot svg { width: 20px; height: 20px; }
.rot .r2 { margin-left: 11px; }
.rot .r3, .rot .r4 { width: 24px; height: 24px; }
.rot .r3 { margin-left: 4px; }
.rot .r4 { margin-left: 7px; }
.angle { width: 52px; height: 22px; margin-left: 7px; background: #fff; border: 1px solid #e2e2e2; border-bottom-color: #777; line-height: 19px; padding-left: 5px; }
.preview { height: 115px; margin-top: 6px; background: #dfdfd0; shape-rendering: crispEdges; }
.dev { height: 39px; background: #efefef; display: flex; align-items: center; padding: 4px 0 0 6px; }
.dev svg { width: 22px; height: 22px; margin-right: 9px; }
.dev text { font: 18px "Open Sans", sans-serif; fill: #fff; stroke: #fff; stroke-width: .4px; }
.dev span { margin-left: 88px; letter-spacing: -.3px; }
.filter { height: 22px; display: flex; gap: 1px; background: #efefef; }
.combo { width: 92px; border: 1px solid #ccc; background: #fff; padding: 0 6px 1px 3px; display: flex; align-items: center; justify-content: space-between; }
.combo svg { width: 10px; height: 6px; }
.field { flex: 1; background: #fff; border: 1px solid #e8e8e8; border-bottom-color: #888; }
.list { height: 344px; margin: 0; padding: 1px 0; list-style: none; background: #fff; border: 1px solid #82828c; font-size: 14.500px; letter-spacing: -.2px; }
.list li { height: 23px; line-height: 21px; padding-left: 3px; }
.list .sel { background: #d9d9d9; }
.canvas { width: 1569px; height: 596px; background: #dfdfd0; margin-top: 2px; overflow: hidden; }
.sch text { font-family: "Liberation Sans", Arial, sans-serif; fill: #000; }
.sch .blue { fill: #0000c8; }
.stitle { width: 1877px; height: 28px; margin: 11px 0 1px; background: #dadada; border: 1px solid #b5b5b5; border-left: 0; display: flex; align-items: center; justify-content: space-between; padding: 0 4px 0 5px; font-size: 14.500px; letter-spacing: -.2px; }
.scope { height: 218px; display: flex; gap: 2px; }
.sleft { width: 1247px; }
.screen { width: 1247px; height: 190px; overflow: hidden; }
.hscroll { height: 20px; margin-top: 8px; background: #efefef; display: flex; align-items: center; padding: 0 0 1px 21px; }
.thumb { width: 401px; height: 3px; border-radius: 2px; background: #858585; }
.instr { width: 628px; height: 218px; }
.instr text, .rd { font-family: "Liberation Sans", Arial, sans-serif; }
.instr text:not([fill]) { fill: #262626; }
.instr .val { font-family: "DejaVu Sans", sans-serif; }
.instr .src { font-family: "Open Sans", sans-serif; }
.instr .wm text { fill: rgba(125, 125, 125, .5); font-family: "Noto Sans", sans-serif; }
.status { flex: none; height: 36px; display: flex; align-items: center; padding: 0 0 2px 6px; }
.play { margin-left: 6px; }
.info { font: 700 20px "Liberation Serif", serif; fill: #fff; }
.msg { font: 13px "Noto Sans", sans-serif; }
.vs { width: 1px; height: 34px; background: #b5b5b5; margin-left: -1px; flex: none; }
.slot.g2 { margin-left: 3px; }
.anim { width: 1194px; height: 26px; margin-left: 5px; background: #efefef; padding-left: 6px; line-height: 26px; font-size: 14.500px; letter-spacing: -.22px; white-space: nowrap; }
.caret { width: 28px; padding-left: 9px; }
.cx { width: 168px; margin-left: 8px; }
.cy { width: 145px; }
.cx, .cy, .th { font-size: 14px; letter-spacing: -.2px; white-space: nowrap; }
</style>
